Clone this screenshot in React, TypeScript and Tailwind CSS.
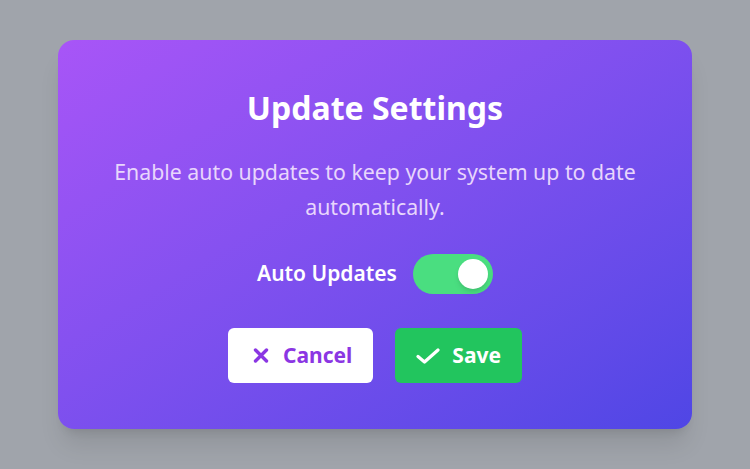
import { useState } from "react";

function CrossIcon() {
  return (
    <svg width="20" height="20" viewBox="0 0 20 20" className="shrink-0" aria-hidden="true">
      <path d="M4.5 4 L15.5 15 M15.5 4 L4.5 15" stroke="currentColor" strokeWidth="3.4" strokeLinecap="round" fill="none" />
    </svg>
  );
}

function CheckIcon() {
  return (
    <svg width="24" height="16" viewBox="0 0 24 16" className="shrink-0" aria-hidden="true">
      <path d="M2 8.5 L8.5 14 L22 2" stroke="currentColor" strokeWidth="3.2" strokeLinecap="round" strokeLinejoin="round" fill="none" />
    </svg>
  );
}

export default function App() {
  const [enabled, setEnabled] = useState(true);

  return (
    <div
      className="flex min-h-screen items-center justify-center bg-[#a0a4ab]"
      style={{ fontFamily: '"Noto Sans", "Open Sans", sans-serif' }}
    >
      <div className="flex w-[634px] flex-col items-center rounded-2xl bg-gradient-to-br from-[#a855f7] to-[#4f46e5] px-12 pt-12 pb-[46px] text-center shadow-xl">
        <h1 className="text-[32px] leading-[40px] font-bold text-white">Update Settings</h1>
        <p className="mt-[26px] text-[21.3px] leading-[35px] text-[#e8d6fc]">
          Enable auto updates to keep your system up to date automatically.
        </p>

        <div className="mt-[30px] flex h-10 items-center gap-4">
          <span className="text-[21px] font-semibold text-white">Auto Updates</span>
          <button
            type="button"
            onClick={() => setEnabled((v) => !v)}
            className={`flex h-10 w-20 items-center rounded-full px-[5px] transition-colors ${enabled ? "justify-end bg-[#4ade80]" : "justify-start bg-white/30"}`}
          >
            <span className="h-[30px] w-[30px] rounded-full bg-white shadow-md" />
          </button>
        </div>

        <div className="mt-[34px] flex gap-[22px]">
          <button
            type="button"
            className="flex h-[55px] items-center gap-3 rounded-md bg-white pr-[21px] pl-[23px] text-[21px] font-bold text-[#8b36e3]"
          >
            <CrossIcon />
            Cancel
          </button>
          <button
            type="button"
            className="flex h-[55px] items-center gap-3 rounded-md bg-[#22c55e] px-[21px] text-[21px] font-bold text-white"
          >
            <CheckIcon />
            Save
          </button>
        </div>
      </div>
    </div>
  );
}
